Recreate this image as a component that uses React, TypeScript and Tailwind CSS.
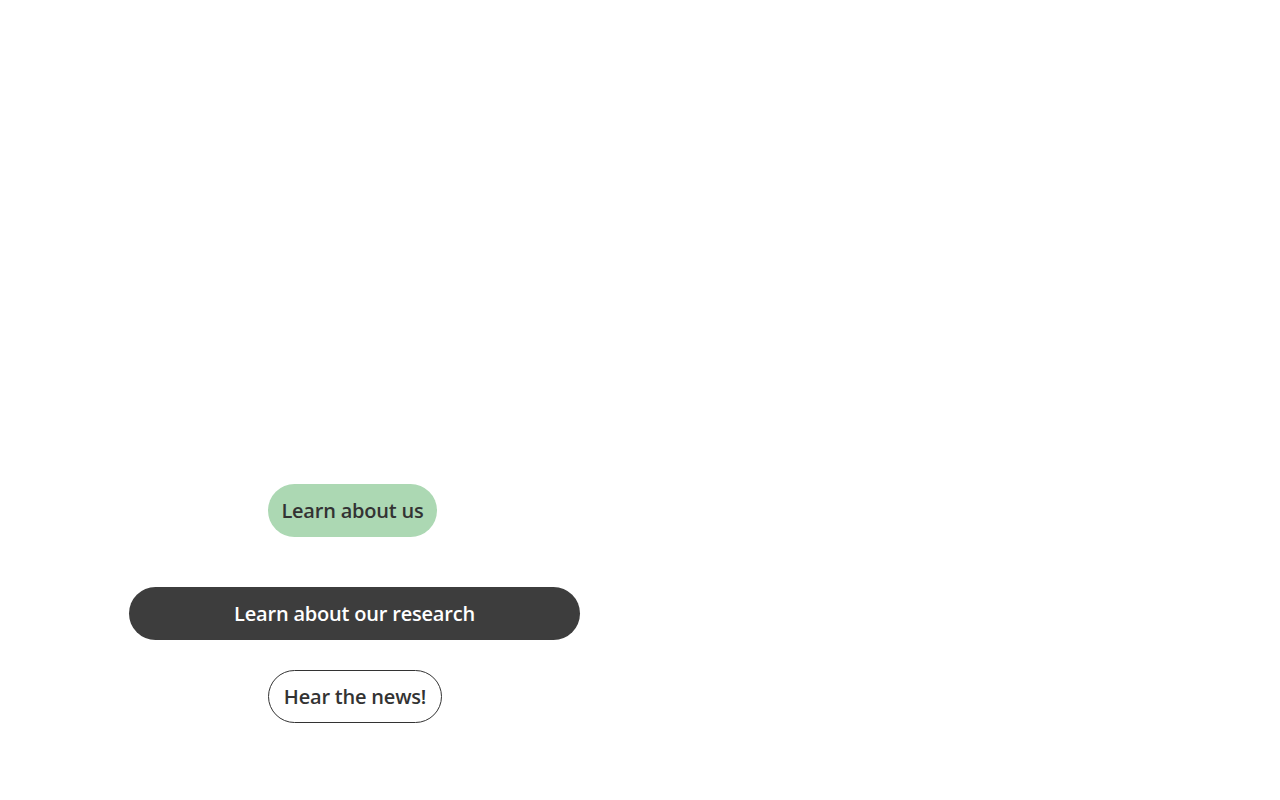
import React from "react";

const App: React.FC = () => {
  return (
    <div
      className="w-[1280px] h-[800px] bg-white"
      style={{ fontFamily: '"Open Sans", sans-serif' }}
    >
      <div className="flex flex-col items-center w-[451px] ml-[129px] pt-[484px]">
        <a className="mr-[4px] flex items-center justify-center h-[53px] px-[13px] rounded-full bg-[#acd8b3] text-[#333333] text-[20px] font-semibold tracking-[-0.01em]">
          Learn about us
        </a>
        <a className="mt-[50px] flex items-center justify-center w-full h-[53px] rounded-full bg-[#3d3d3d] text-white text-[20px] font-semibold tracking-[-0.01em]">
          Learn about our research
        </a>
        <a className="mt-[30px] ml-[1px] flex items-center justify-center h-[53px] px-[14.5px] rounded-full border border-[#333333] text-[#333333] text-[20px] font-semibold tracking-[-0.01em]">
          Hear the news!
        </a>
      </div>
    </div>
  );
};

export default App;
